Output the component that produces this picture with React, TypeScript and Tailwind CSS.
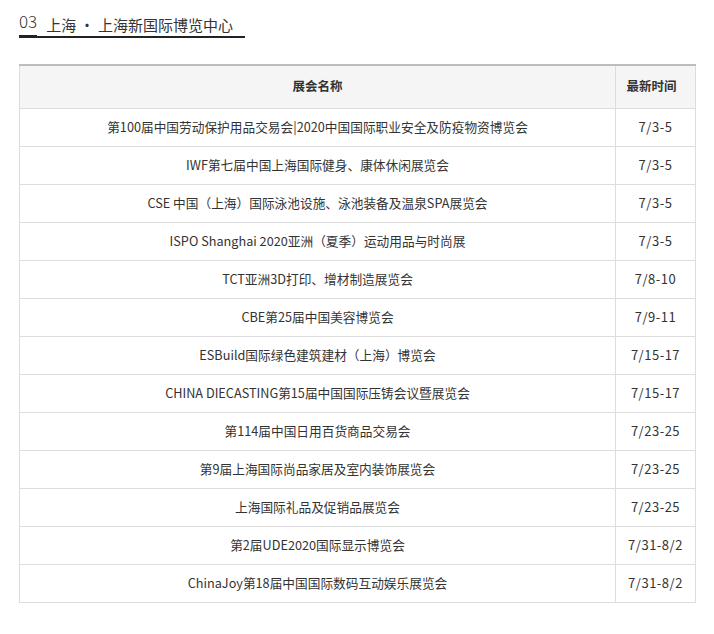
const rows: [string, string][] = [
  ['第100届中国劳动保护用品交易会|2020中国国际职业安全及防疫物资博览会', '7/3-5'],
  ['IWF第七届中国上海国际健身、康体休闲展览会', '7/3-5'],
  ['CSE 中国（上海）国际泳池设施、泳池装备及温泉SPA展览会', '7/3-5'],
  ['ISPO Shanghai 2020亚洲（夏季）运动用品与时尚展', '7/3-5'],
  ['TCT亚洲3D打印、增材制造展览会', '7/8-10'],
  ['CBE第25届中国美容博览会', '7/9-11'],
  ['ESBuild国际绿色建筑建材（上海）博览会', '7/15-17'],
  ['CHINA DIECASTING第15届中国国际压铸会议暨展览会', '7/15-17'],
  ['第114届中国日用百货商品交易会', '7/23-25'],
  ['第9届上海国际尚品家居及室内装饰展览会', '7/23-25'],
  ['上海国际礼品及促销品展览会', '7/23-25'],
  ['第2届UDE2020国际显示博览会', '7/31-8/2'],
  ['ChinaJoy第18届中国国际数码互动娱乐展览会', '7/31-8/2'],
];

export default function App() {
  return (
    <div className="min-h-screen bg-white px-[19px] pt-[9px] text-[#333] font-['Noto_Sans_CJK_SC','Noto_Sans',sans-serif]">
      {/* section title */}
      <div className="flex items-end">
        <span className="border-b-[3px] border-[#222] text-[17px] leading-[24px] pb-[2px] font-light">03</span>
        <span className="border-b-2 border-[#222] pl-[9px] pr-[12px] text-[15px] leading-[20px] pb-[1px]">
          上海 · 上海新国际博览中心
        </span>
      </div>

      {/* exhibitions table */}
      <table className="mt-[26px] w-[677px] border-collapse text-[12.7px] border-t-2 border-t-[#bdbdbd]">
        <thead>
          <tr className="bg-[#f5f5f5] h-[43px]">
            <th className="border border-[#ddd] border-t-0 font-bold text-[12.5px] text-center">展会名称</th>
            <th className="border border-[#ddd] border-t-0 font-bold text-[12.5px] text-center w-[80px] pr-[8px]">最新时间</th>
          </tr>
        </thead>
        <tbody>
          {rows.map(([name, date]) => (
            <tr key={name} className="h-[38px]">
              <td className="border border-[#ddd] text-center">{name}</td>
              <td className="border border-[#ddd] text-center text-[13px] tracking-[0.5px]">{date}</td>
            </tr>
          ))}
        </tbody>
      </table>
    </div>
  );
}
